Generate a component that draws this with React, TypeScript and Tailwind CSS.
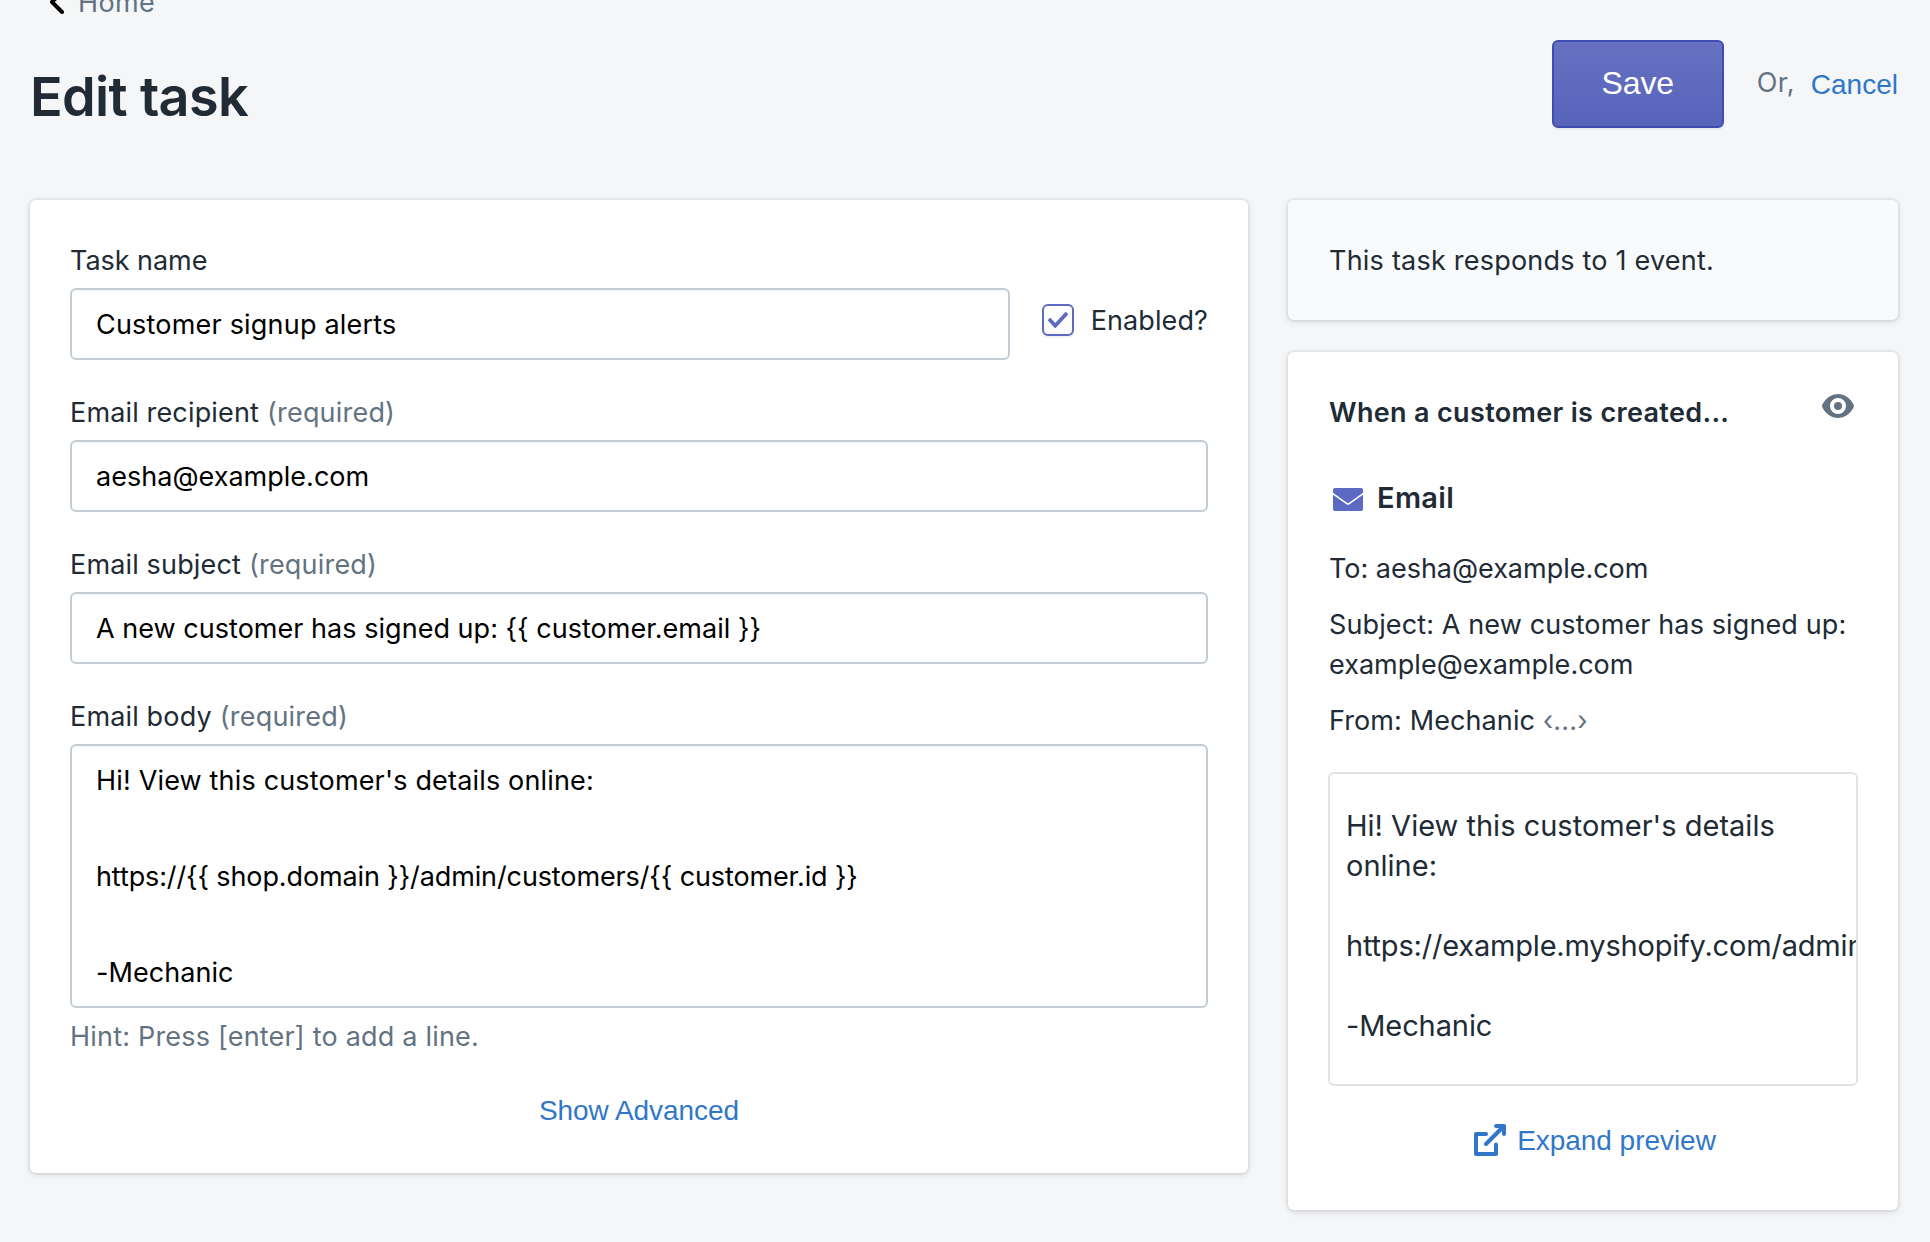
import type { ReactNode } from 'react'

const card = 'rounded-[6px] bg-white shadow-[0_0_0_2px_rgba(63,63,68,0.05),0_2px_6px_0_rgba(63,63,68,0.15)]'
const field =
  'h-[72px] w-full rounded-[6px] border-2 border-[#c4cdd5] bg-white px-6 text-black outline-none shadow-[inset_0_2px_0_0_rgba(99,115,129,0.05)]'
const linkButton = 'font-["Liberation_Sans",Arial,sans-serif] text-[28px] leading-10 text-[#3177c9]'

function Label({ children, required }: { children: ReactNode; required?: boolean }) {
  return (
    <div className="mb-[7px] flex gap-2 whitespace-pre pt-px">
      {children}
      {required && <span className="tracking-[0.2px] text-[#637381]">(required)</span>}
    </div>
  )
}

function ChevronLeft() {
  return (
    <svg viewBox="0 0 20 20" className="size-10 fill-black">
      <path d="M12 16a.997.997 0 0 1-.707-.293l-5-5a.999.999 0 0 1 0-1.414l5-5a.999.999 0 1 1 1.414 1.414L8.414 10l4.293 4.293A.999.999 0 0 1 12 16" />
    </svg>
  )
}

function Tick() {
  return (
    <svg viewBox="0 0 20 20" className="size-10 shrink-0 fill-[#5c6ac4]">
      <path d="M8.315 13.859l-3.182-3.417a.506.506 0 0 1 0-.684l.643-.683a.437.437 0 0 1 .642 0l2.22 2.393 4.942-5.327a.436.436 0 0 1 .643 0l.643.684a.504.504 0 0 1 0 .683l-5.91 6.35a.437.437 0 0 1-.642 0" />
    </svg>
  )
}

function Eye() {
  return (
    <svg viewBox="0 0 20 20" className="size-10 fill-[#637381]">
      <path d="M17.928 9.628C17.837 9.399 15.611 4 10 4S2.162 9.4 2.07 9.628a1.017 1.017 0 0 0 0 .744C2.163 10.601 4.389 16 10 16s7.837-5.399 7.928-5.628a1.017 1.017 0 0 0 0-.744zM10 14a4 4 0 1 1 0-8 4 4 0 0 1 0 8zm0-6a2 2 0 1 0 .002 4.001A2 2 0 0 0 10 8z" />
    </svg>
  )
}

function Envelope() {
  return (
    <svg viewBox="0 0 30 23" className="h-[23px] w-[30px]">
      <rect width="30" height="23" rx="2" fill="#5c6ac4" />
      <path d="M-1 5L14.2 15.8Q15 16.300 15.8 15.8L31 5" fill="none" stroke="#fff" strokeWidth="1.6" />
    </svg>
  )
}

function External() {
  return (
    <svg
      viewBox="0 0 32 32"
      className="size-8"
      fill="none"
      stroke="#3177c9"
      strokeWidth="4"
      strokeLinecap="round"
      strokeLinejoin="round"
    >
      <path d="M12 10H2v20h20v-9.500" />
      <path d="M12 20L28 4" />
      <path d="M22 2h8v8" />
    </svg>
  )
}

export default function App() {
  return (
    <div className='h-[1242px] w-[1930px] overflow-hidden bg-[#f4f6f8] font-[Inter,sans-serif] text-[27px] leading-10 tracking-[0.15px] text-[#212b36]'>
      <header className="flex h-[200px] justify-between pl-[30px] pr-8">
        <div>
          <a className="-mt-[18px] flex h-10 items-center pl-2">
            <ChevronLeft />
            <span className="mt-[2px] tracking-[0.4px] text-[#637381]">Home</span>
          </a>
          <h1 className="mt-[47px] text-[54px] font-semibold leading-[56px] tracking-[-0.65px]">Edit task</h1>
        </div>
        <div className="mt-10 flex h-[88px] items-center">
          <button className='h-[88px] w-[172px] rounded-[6px] border-2 border-[#3f4eae] bg-linear-to-b from-[#6671c1] to-[#5864bb] pb-0.5 font-["Liberation_Sans",Arial,sans-serif] text-[32px] tracking-[-0.1px] text-white shadow-[inset_0_2px_0_0_#6774c8,0_2px_0_0_rgba(22,29,37,0.05)]'>
            Save
          </button>
          <span className="mb-[2px] ml-[33px] tracking-[0.4px] text-[#637381]">Or,</span>
          <button className={`ml-4 mt-[2px] tracking-[0] ${linkButton}`}>Cancel</button>
        </div>
      </header>

      <main className="flex items-start gap-10 pl-[30px]">
        <section className={`flex h-[973px] w-[1218px] flex-col p-10 ${card}`}>
          <div className="flex">
            <div className="w-[940px]">
              <Label><span className="tracking-[-0.04px]">Task name</span></Label>
              <input className={`${field} tracking-[0.2px]`} defaultValue="Customer signup alerts" />
            </div>
            <label className="mt-[60px] ml-8 flex h-10 items-center">
              <span className="flex size-8 items-center justify-center rounded-[6px] border-2 border-[#5c6ac4] bg-linear-to-b from-white to-[#f9fafb] shadow-[0_2px_0_0_rgba(22,29,37,0.05)]">
                <Tick />
              </span>
              <span className="ml-[17px] mt-[2px] tracking-[0.1px]">Enabled?</span>
            </label>
          </div>
          <div className="mt-8">
            <Label required>Email recipient</Label>
            <input className={`${field} tracking-[0.02px]`} defaultValue="aesha@example.com" />
          </div>
          <div className="mt-8">
            <Label required>Email subject</Label>
            <input className={`${field} tracking-[0.03px]`} defaultValue="A new customer has signed up: {{ customer.email }}" />
          </div>
          <div className="mt-8">
            <Label required>Email body</Label>
            <div className="h-[264px] whitespace-pre rounded-[6px] border-2 border-[#c4cdd5] px-6 pt-[11px] leading-[48px] text-black shadow-[inset_0_2px_0_0_rgba(99,115,129,0.05)]">
              <p className="tracking-[0.17px]">Hi! View this customer's details online:</p>
              <p className="mt-12 tracking-[-0.115px]">{'https://{{ shop.domain }}/admin/customers/{{ customer.id }}'}</p>
              <p className="mt-12 tracking-[0.05px]">-Mechanic</p>
            </div>
          </div>
          <p className="mt-[9px] tracking-[0.2px] text-[#637381]">Hint: Press [enter] to add a line.</p>
          <button className={`mt-[34px] self-center tracking-[-0.06px] ${linkButton}`}>Show Advanced</button>
        </section>

        <aside className="flex w-[610px] flex-col gap-8">
          <section className="h-[120px] rounded-[6px] bg-[#f9fafb] pl-[41px] pt-[41px] tracking-[0.22px] shadow-[0_0_0_2px_rgba(63,63,68,0.05),0_2px_6px_0_rgba(63,63,68,0.15)]">
            This task responds to 1 event.
          </section>
          <section className={`flex h-[858px] flex-col px-10 pt-[41px] ${card}`}>
            <div className="flex justify-between pl-px">
              <h2 className="font-semibold tracking-[0.34px]">When a customer is created...</h2>
              <span className="-mt-[7px]">
                <Eye />
              </span>
            </div>
            <div className="mt-[45px] flex h-10 items-center pl-[5px]">
              <span className="mt-[3px]">
                <Envelope />
              </span>
              <h3 className="ml-[14px] text-[29px] font-semibold tracking-[0.35px]">Email</h3>
            </div>
            <div className="mt-[31px] flex flex-col gap-4 whitespace-nowrap pl-px">
              <p className="tracking-[-0.02px]">To: aesha@example.com</p>
              <p className="tracking-[0.12px]">
                Subject: A new customer has signed up:
                <br />
                <span className="tracking-[0.02px]">example@example.com</span>
              </p>
              <p className="tracking-[0.1px]">
                From: Mechanic <span className="tracking-[0.2px] text-[#637381]">‹...›</span>
              </p>
            </div>
            <div className="mt-[31px] h-[314px] w-[530px] overflow-hidden whitespace-pre rounded-[6px] border-2 border-[#dfe3e8] px-4 py-8 text-[29px] tracking-[0.01px]">
              <p>Hi! View this customer's details</p>
              <p>online:</p>
              <p className="mt-10 tracking-[-0.19px]">https://example.myshopify.com/admin/customers/1234567890</p>
              <p className="mt-10 tracking-[-0.1px]">-Mechanic</p>
            </div>
            <button className="mt-[34px] flex h-10 items-center self-center pl-1">
              <External />
              <span className={`ml-[11px] mt-[2px] tracking-[-0.04px] ${linkButton}`}>Expand preview</span>
            </button>
          </section>
        </aside>
      </main>
    </div>
  )
}
